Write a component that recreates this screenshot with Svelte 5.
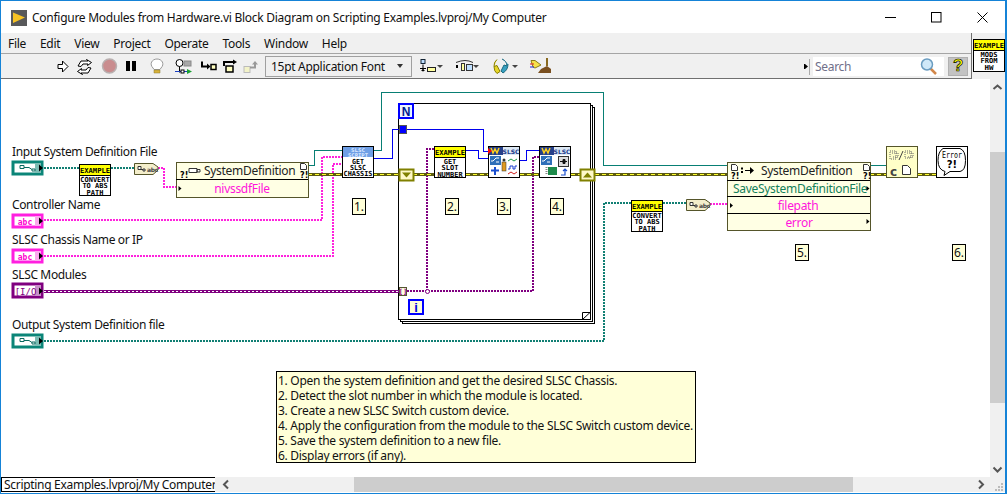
<script>
  const menus = ['File', 'Edit', 'View', 'Project', 'Operate', 'Tools', 'Window', 'Help'];
  const refWires = ['M308 165.5H314.5V150.5H342', 'M373 150.5H381.5V92.5H603.5V165.5H728', 'M870 165.5H886'];
  const pathWires = ['M44 168H79', 'M111 168H134', 'M44 341H604V203H631', 'M663 203H686'];
  const strWires = ['M158 168H164V187H176', 'M44 220H322V157H342', 'M44 256H333V164H342', 'M710 204H727'];
  const blueWires = ['M373 158.5H392.5V129.5H399', 'M407 129.5H483.5V151.5H488', 'M466 150.5H478.5V158.5H488', 'M520 160.5H526.5V150.5H539'];
  const purpleWires = ['M407 291H533V157H539', 'M427 291V149H434'];
  const classSegs = [[308, 342], [373, 399], [413, 434], [466, 488], [520, 539], [571, 580], [595, 728], [870, 886], [918, 936]];
  const steps = [
    { t: '1.', x: 352, y: 198 }, { t: '2.', x: 445, y: 198 }, { t: '3.', x: 497, y: 198 },
    { t: '4.', x: 550, y: 198 }, { t: '5.', x: 795, y: 244 }, { t: '6.', x: 952, y: 244 }
  ];
  const notes = [
    '1. Open the system definition and get the desired SLSC Chassis.',
    '2. Detect the slot number in which the module is located.',
    '3. Create a new SLSC Switch custom device.',
    '4. Apply the configuration from the module to the SLSC Switch custom device.',
    '5. Save the system definition to a new file.',
    '6. Display errors (if any).'
  ];
</script>

{#snippet exampleNode(x, y, lines)}
  <rect class="nodebox" x={x + .5} y={y + .5} width="31" height="31" />
  <rect class="exbar" x={x + 1} y={y + 1} width="30" height="10" />
  <line class="blk" x1={x} x2={x + 32} y1={y + 11.5} y2={y + 11.5} />
  <text class="pix" x={x + 16} y={y + 8.5} textLength="30" lengthAdjust="spacingAndGlyphs">EXAMPLE</text>
  {#each lines as l, i}
    <text class="pix" x={x + 16} y={y + 18 + i * 6.3} textLength={l.length * 4.2} lengthAdjust="spacingAndGlyphs">{l}</text>
  {/each}
{/snippet}

{#snippet convNode(x, y)}
  <path class="conv" d="M{x + .5} {y + .5}H{x + 19}L{x + 24} {y + 4}V{y + 7}L{x + 19} {y + 11.5}H{x + .5}Z" />
  <path class="thin" d="M{x + 4} {y + 3.5}h3v3h-3zM{x + 7} {y + 6.5}h2M{x + 9} {y + 6}h2v2h-2z" />
  <text class="conv-t" x={x + 13} y={y + 9}>abc</text>
{/snippet}

{#snippet pathTerm(y)}
  <rect class="term-path" x="13" y={y + 1} width="29" height="12" />
  <rect class="term-side-t" x="35" y={y + 2} width="6" height="10" />
  <path class="thin-t" d="M20 {y + 4.5}h4v3h-4zM24 {y + 6.5}h5l3 2M32 {y + 8}h3v2h-3z" />
  <path d="M39 {y + 3.5}l4 3.5l-4 3.5z" />
{/snippet}

{#snippet strTerm(y)}
  <rect class="term-str" x="13" y={y + 1} width="29" height="12" />
  <rect class="term-side-s" x="35" y={y + 2} width="6" height="10" />
  <text class="abc" x="25" y={y + 10.5}>abc</text>
  <path d="M39 {y + 3.5}l4 3.5l-4 3.5z" />
{/snippet}

{#snippet nodeFrame(x, y)}
  <rect class="nodebox" x={x + .5} y={y + .5} width="31" height="31" />
  <rect class="w-bg" x={x + 1} y={y + 1} width="14" height="8" />
  <path class="w-y" d="M{x + 3} {y + 2}l2 5l2 -4l2 4l2 -5" />
  <rect class="slsc-bg" x={x + 15} y={y + 1} width="16" height="8" />
  <text class="slsc" x={x + 23} y={y + 8}>SLSC</text>
  <rect class="sw" x={x + 2} y={y + 10} width="11" height="9" />
  <path class="wht" d="M{x + 3} {y + 15}h2l3 -3h3M{x + 8} {y + 16}h3" />
{/snippet}

<div class="window">
  <header class="title">
    <svg class="app-ic" viewBox="0 0 16 16"><rect width="16" height="16" fill="#58595b" /><path d="M2 2.5L14 7.5L2 13Z" fill="#f7c325" /></svg>
    <span class="title-t">Configure Modules from Hardware.vi Block Diagram on Scripting Examples.lvproj/My Computer</span>
    <div class="winbtns">
      <svg width="11" height="11" viewBox="0 0 11 11"><path d="M0 5.5H11" stroke="#000" /></svg>
      <svg width="11" height="11" viewBox="0 0 11 11"><rect x=".5" y=".5" width="9.5" height="9.5" fill="none" stroke="#000" /></svg>
      <svg width="11" height="11" viewBox="0 0 11 11"><path d="M.5 .5L10.5 10.5M10.5 .5L.5 10.5" stroke="#000" /></svg>
    </div>
  </header>

  <div class="barrow">
    <div class="bars">
      <nav class="menu">{#each menus as m}<span>{m}</span>{/each}</nav>
      <div class="toolbar">
        <svg class="tg1" viewBox="57 54 203 24" width="203" height="24">
          <path class="ol" d="M58 64.500h4.500v-3.500l5.500 5.500l-5.500 5.500v-3.500h-4.500z" />
          <path class="ol" d="M78 66l3 -5h7l-1.500 -1.500l5 3l-4 3l.5 -1.500h-5l-2 2.500zM91 68l-3 5h-7l1.500 1.500l-5 -3l4 -3l-.5 1.500h5l2 -2.500z" />
          <circle cx="109.500" cy="66" r="7" fill="#c98c8e" stroke="#b9b0b0" stroke-width="1.500" />
          <rect x="126" y="61" width="4" height="10" />
          <rect x="132" y="61" width="4" height="10" />
          <path d="M153 68c-4 -4 -1 -9 4 -9s8 5 4 9l-1 1.500h-6z" fill="#fff" stroke="#9a9a9a" />
          <path d="M154 70h6v3h-6z" fill="#d8b23a" stroke="#8a7a30" stroke-width=".5" />
          <circle cx="179.500" cy="63" r="3.500" class="ol" />
          <path d="M179.500 66.500v6" stroke="#000" />
          <rect x="184" y="61" width="7" height="5" fill="#a8a8a8" stroke="#888" />
          <path d="M175 71.500h13" stroke="#1a3fc0" />
          <rect x="181" y="70" width="3" height="3" class="ol" />
          <path d="M187 69l5 2.500l-5 2.500z" fill="#18a030" />
          <path class="k2" d="M202 61.500v5h6" />
          <path d="M207 63.500l3.500 3l-3.500 3z" />
          <rect x="211" y="64.500" width="5" height="5" fill="#ffffc0" stroke="#000" stroke-width="1.500" />
          <path class="k2" d="M224 66v-4h10" />
          <path d="M233 59.500l4 2.500l-4 2.500z" />
          <rect x="226" y="66" width="7" height="6" fill="#ffffc0" stroke="#000" stroke-width="1.500" />
          <rect x="244" y="66.500" width="6" height="6" fill="#f3f3c8" stroke="#bbb" />
          <path d="M250 67.500h5v-4" fill="none" stroke="#999" stroke-width="2" />
          <path d="M252 64.500l3 -3.500l3 3.500z" fill="#999" />
        </svg>
        <div class="fontsel"><span>15pt Application Font</span><i class="caret"></i></div>
        <svg class="tg2" viewBox="420 54 132 24" width="132" height="24">
          <rect x="421" y="59.500" width="4" height="4" fill="#bfe0ff" stroke="#123" />
          <path d="M423 64.500v7M420 68.500h6" stroke="#000" />
          <path d="M421 71l2 -2l2 2z" />
          <rect x="427.500" y="67.500" width="8" height="4" fill="#ffffa0" stroke="#222" />
          <path d="M437 65h6l-3 3z" fill="#444" />
          <path d="M456 62.500q5 -2 9 -2t8 2" fill="none" stroke="#333" />
          <rect x="456" y="65" width="2" height="3" />
          <rect x="461.500" y="63.500" width="3" height="7" fill="#ffffa0" stroke="#333" />
          <rect x="466.500" y="64.500" width="6" height="6" fill="#bfe0ff" stroke="#333" />
          <path d="M473 65h6l-3 3z" fill="#444" />
          <path d="M497 59.500a8 8 0 0 0 -3 7l3 -1l3 6l-3 2q-3 -2 -3 -7" fill="#e6d62a" stroke="#8a8000" />
          <path d="M502 59a8 8 0 0 1 5 7l-3 -1l-3 6l2 2q5 -3 5 -9" fill="#38a0c0" stroke="#1a6a80" />
          <path d="M512 65h6l-3 3z" fill="#444" />
          <path d="M531 60.500h4l6 4.500l-6 3l-2 -1z" fill="#f6e24a" stroke="#8a7d1a" />
          <path d="M530 64h4" stroke="#d22" />
          <path d="M530 67h4" stroke="#22d" />
          <path d="M546 58h2v8h-2z" fill="#8a6a20" />
          <path d="M538 73l3 -4l6 -3l4 3v4z" fill="#7a5020" />
        </svg>
        <div class="fill"></div>
        <svg class="more" width="6" height="19" viewBox="0 0 6 19"><path d="M0 7h1l3 2.500l-3 2.500h-1z" /><path d="M5.500 2V18" stroke="#aaa" /></svg>
        <div class="search">
          <span>Search</span>
          <svg width="17" height="17" viewBox="0 0 17 17"><path d="M10 10l6 6" stroke="#d2874a" stroke-width="2.500" /><circle cx="7" cy="6.500" r="5.500" fill="#cfe8f8" stroke="#6a9cc0" stroke-width="1.500" /></svg>
        </div>
        <div class="help"><span>?</span></div>
      </div>
    </div>
    <div class="vi-ic">
      <svg width="32" height="33" viewBox="0 0 32 33">
        <rect x=".5" y=".5" width="31" height="32" fill="#fff" stroke="#000" />
        <rect x="1" y="1" width="30" height="10" fill="#ff0" />
        <line x1="0" x2="32" y1="11.500" y2="11.500" stroke="#000" />
        <text class="pix" x="16" y="8.500" textLength="30" lengthAdjust="spacingAndGlyphs">EXAMPLE</text>
        <text class="pix" x="16" y="18" textLength="17" lengthAdjust="spacingAndGlyphs">MODS</text>
        <text class="pix" x="16" y="24.300" textLength="17" lengthAdjust="spacingAndGlyphs">FROM</text>
        <text class="pix" x="16" y="30.600" textLength="9" lengthAdjust="spacingAndGlyphs">HW</text>
      </svg>
    </div>
  </div>

  <div class="mid">
    <svg class="canvas" viewBox="1 79 989 398" width="989" height="398">
      <!-- labels -->
      <text class="lbl" x="12" y="156">Input System Definition File</text>
      <text class="lbl" x="12" y="209">Controller Name</text>
      <text class="lbl" x="12" y="244">SLSC Chassis Name or IP</text>
      <text class="lbl" x="12" y="279">SLSC Modules</text>
      <text class="lbl" x="12" y="329">Output System Definition file</text>

      <!-- structure -->
      <rect class="frame" x="402.500" y="107.500" width="192" height="216" />
      <rect class="frame" x="400.500" y="105.500" width="192" height="216" />
      <rect class="frame main" x="398.500" y="103.500" width="192" height="216" />
      <path class="fold" d="M582.500 320V312.500H590.500M582.500 319.500L590 312.500" />

      <!-- wires -->
      {#each refWires as d}<path class="w-ref" {d} />{/each}
      {#each pathWires as d}<path class="w-path" {d} />{/each}
      {#each strWires as d}<path class="w-str" {d} />{/each}
      {#each blueWires as d}<path class="w-blue" {d} />{/each}
      {#each purpleWires as d}<path class="w-pur" {d} />{/each}
      <circle cx="427.500" cy="291.500" r="2" fill="#fff" stroke="#800080" />
      <line class="arr-o" x1="44" x2="399" y1="291.500" y2="291.500" />
      <line class="arr-i" x1="44" x2="399" y1="291.500" y2="291.500" />
      {#each classSegs as s}
        <line class="cl-o" x1={s[0]} x2={s[1]} y1="174.500" y2="174.500" />
        <line class="cl-i" x1={s[0]} x2={s[1]} y1="174.500" y2="174.500" />
      {/each}

      <!-- terminals -->
      {@render pathTerm(161)}
      {@render strTerm(214)}
      {@render strTerm(249)}
      <rect class="term-arr" x="13" y="284" width="29" height="13" />
      <rect class="term-side-a" x="35" y="285" width="6" height="11" />
      <text class="io" x="25.500" y="294.500">[I/O</text>
      <path d="M39 287.500l4 3.500l-4 3.500z" />
      {@render pathTerm(334)}

      <!-- nodes -->
      {@render exampleNode(79, 164, ['CONVERT', 'TO ABS', 'PATH'])}
      {@render convNode(134, 163)}
      {@render exampleNode(631, 200, ['CONVERT', 'TO ABS', 'PATH'])}
      {@render convNode(686, 199)}

      <rect class="pn" x="176.500" y="162.500" width="132" height="35" />
      <line class="pn-l" x1="176" x2="308" y1="179.500" y2="179.500" />
      <text class="bang" x="180" y="178">?!</text>
      <path class="thin" d="M189 168.500h8v4h-8zM197 169.500h3v2.500h-3z" />
      <text class="pn-h" x="204" y="175">SystemDefinition</text>
      <path class="thin" d="M300.500 163.500h4l2 2v4h-6z" />
      <text class="bang" x="300" y="178">?!</text>
      <path d="M178.500 186l3 2.500l-3 2.500z" />
      <text class="pn-p" x="242" y="193">nivssdfFile</text>

      <rect class="nodebox" x="342.500" y="146.500" width="31" height="31" />
      <rect x="343" y="147" width="30" height="10" fill="#6f9fe6" />
      <text class="pix-w" x="358" y="151.500" textLength="14" lengthAdjust="spacingAndGlyphs">SLSC</text>
      <text class="pix-w" x="358" y="156.500" textLength="20" lengthAdjust="spacingAndGlyphs">SCRIPT</text>
      <text class="pix" x="358" y="163.500" textLength="12" lengthAdjust="spacingAndGlyphs">GET</text>
      <text class="pix" x="358" y="169.800" textLength="16" lengthAdjust="spacingAndGlyphs">SLSC</text>
      <text class="pix" x="358" y="176.100" textLength="29" lengthAdjust="spacingAndGlyphs">CHASSIS</text>

      {@render exampleNode(434, 146, ['GET', 'SLOT', 'NUMBER'])}

      {@render nodeFrame(488, 146)}
      <path d="M488 148l4 3l-4 3z" fill="#f00" />
      <path d="M491 170.500h8M495 167v8" stroke="#1a4fd0" stroke-width="2" />
      <circle cx="504" cy="160" r="1.500" fill="#333" />
      <rect x="502" y="162" width="4" height="9" fill="#e09a20" stroke="#333" stroke-width=".5" />
      <path d="M508 161l3 -2l3 2l3 -2" fill="none" stroke="#1a9a4a" />
      <path d="M508 169h2v-3h3v3h2v-3h2" fill="none" stroke="#1a3fd0" />
      <path d="M508 174l3 -2l3 2l3 -2" fill="none" stroke="#d02020" />

      {@render nodeFrame(539, 146)}
      <rect x="558.500" y="156.500" width="10" height="10" fill="#ddd" stroke="#333" />
      <path d="M560 161.500h3M563 159.500h2v4h-2zM565 161.500h2" stroke="#111" fill="#111" />
      <rect x="548" y="167" width="9" height="8" fill="#1d8a4a" />
      <path d="M546.500 167v8" stroke="#888" stroke-width="2" stroke-dasharray="1 1" />
      <path d="M561 175h4v-5M563 171l2 -2l2 2" fill="none" stroke="#1a4fd0" stroke-width="1.200" />

      <!-- tunnels -->
      <rect class="sr" x="399.500" y="169.500" width="14" height="11" />
      <path class="sr-t" d="M402 172.500h9l-4.500 5z" />
      <rect class="sr" x="580.500" y="169.500" width="14" height="11" />
      <path class="sr-t" d="M583 177.500h9l-4.500 -5z" />
      <rect x="399.500" y="125.500" width="7" height="8" fill="#0000ff" stroke="#555" />
      <rect x="399.500" y="287.500" width="7" height="8" fill="#ffffe0" stroke="#555530" />
      <text class="idx" x="403" y="294">[]</text>

      <rect class="nbox" x="399" y="104" width="14" height="14" />
      <text class="n" x="406" y="115.500">N</text>
      <rect class="ibox" x="409" y="300" width="14" height="14" />
      <text class="n i" x="416" y="312">i</text>

      <!-- write node -->
      <rect class="pn" x="727.500" y="162.500" width="143" height="68" />
      <line class="pn-l" x1="727" x2="870" y1="180.500" y2="180.500" />
      <line class="pn-l" x1="727" x2="870" y1="196.500" y2="196.500" />
      <line class="pn-l" x1="727" x2="870" y1="213.500" y2="213.500" />
      <path class="thin" d="M731.500 164.500h4l2 2v4h-6z" />
      <text class="bang" x="731" y="179">?!</text>
      <path d="M741 167.500h2v2h-2zM741 171h2v2h-2zM745 170h5v-3l4 3.500l-4 3.500v-3h-5z" />
      <text class="pn-h" x="761" y="174.500">SystemDefinition</text>
      <path class="thin" d="M864.500 164.500h4l2 2v4h-6z" transform="translate(-1 0)" />
      <text class="bang" x="863" y="179">?!</text>
      <text class="pn-g" x="733" y="192.500">SaveSystemDefinitionFile</text>
      <path d="M866.500 186l3 2.500l-3 2.500z" />
      <path d="M730 203l3 2.500l-3 2.500z" />
      <text class="pn-p" x="798" y="209.500">filepath</text>
      <text class="pn-p" x="799" y="226.500">error</text>
      <path d="M866.500 219l3 2.500l-3 2.500z" />

      <!-- format -->
      <rect class="fmt" x="886.500" y="146.500" width="31" height="31" />
      <path class="dots" d="M890 151h6v8h-6zM892 153h6v4h-6M905 151h6v7h-6zM907 153h6v4h-6" />
      <path d="M899 160l4 -9" stroke="#444" fill="none" />
      <text class="c" x="890" y="176">c</text>
      <path class="thin" d="M902.500 165.500h5l3 3v6h-8z" fill="#fff" />

      <!-- error -->
      <rect class="nodebox" x="936.500" y="146.500" width="31" height="31" />
      <path class="bub" d="M943 148.500h17q5.500 2 5.500 12t-5.500 11h-10l-6 4l1 -4q-7 -2 -7 -11t5 -12z" />
      <text class="err" x="952" y="158" textLength="20" lengthAdjust="spacingAndGlyphs">Error</text>
      <text class="qm" x="952" y="168">?!</text>

      <!-- step badges -->
      {#each steps as s}
        <rect class="step" x={s.x + .5} y={s.y + .5} width="13" height="16" />
        <text class="step-t" x={s.x + 7} y={s.y + 13}>{s.t}</text>
      {/each}

      <!-- note -->
      <rect class="note" x="276.500" y="371.500" width="419" height="91" />
      {#each notes as n, i}
        <text class="note-t" x="278" y={384.500 + i * 15}>{n}</text>
      {/each}
    </svg>

    <div class="vbar">
      <svg width="15" height="15" viewBox="0 0 15 15"><path class="chev" d="M3.500 10L7.500 6.500L11.500 10" /></svg>
      <div class="vthumb"></div>
      <div class="fill"></div>
      <svg width="15" height="15" viewBox="0 0 15 15"><path class="chev" d="M3.500 5.500L7.500 9.500L11.500 5.500" /></svg>
    </div>
  </div>

  <footer class="status">
    <div class="path">Scripting Examples.lvproj/My Computer</div>
    <div class="hbar">
      <svg class="harr" width="15" height="15" viewBox="0 0 15 15"><path class="chev" d="M10 3.500L6 7.500L10 11.500" /></svg>
      <div class="hthumb"></div>
      <div class="fill"></div>
      <svg class="harr" width="15" height="15" viewBox="0 0 15 15"><path class="chev" d="M6 3.500L10 7.500L6 11.500" /></svg>
    </div>
    <svg class="grip" width="15" height="15" viewBox="0 0 15 15"><path fill="#bbb" d="M11 6h2v2h-2zM8 9h2v2h-2zM11 9h2v2h-2zM5 12h2v2h-2zM8 12h2v2h-2zM11 12h2v2h-2z" /></svg>
  </footer>
</div>

<style>
  :global(body) { margin: 0; background: #fff; }
  .window {
    width: 1007px; height: 494px; box-sizing: border-box; overflow: hidden;
    border: 1px solid #1583d7; border-right-width: 2px;
    display: flex; flex-direction: column;
    font-family: "Noto Sans", "Open Sans", sans-serif; font-size: 12px; color: #111; background: #fff;
    letter-spacing: -.3px;
  }
  .fill { flex: 1; }
  .title { height: 32px; display: flex; align-items: center; flex: none; }
  .app-ic { width: 16px; height: 16px; margin-left: 10px; margin-top: 1px; }
  .title-t { margin-left: 5px; font-size: 12px; white-space: nowrap; letter-spacing: -.27px; }
  .winbtns { margin-left: auto; display: flex; gap: 35px; margin-right: 17px; margin-top: 0; }
  .barrow { display: flex; height: 46px; flex: none; background: #f0f0f0; }
  .bars { width: 970px; border-right: 1px solid #707070; display: flex; flex-direction: column; box-sizing: content-box; }
  .menu { height: 20px; display: flex; gap: 14px; padding-left: 7px; align-items: center; font-size: 12px; }
  .toolbar {
    height: 24px; border-top: 1px solid #a5a5a5; border-bottom: 1px solid #707070;
    display: flex; align-items: center; padding-left: 56px; box-sizing: content-box;
  }
  .tg1, .tg2 { flex: none; display: block; }
  .ol { fill: #fff; stroke: #000; stroke-width: 1; }
  .k2 { fill: none; stroke: #000; stroke-width: 2; }
  .fontsel {
    margin-left: 5px; width: 147px; height: 21px; box-sizing: border-box; border: 1px solid #a0a0a0;
    display: flex; align-items: center; padding-left: 5px; font-size: 12px;
  }
  .caret { margin-left: auto; margin-right: 8px; border: 3px solid transparent; border-top: 4px solid #333; border-bottom: 0; border-left-width: 3px; }
  .tg2 { margin-left: 8px; }
  .more { flex: none; }
  .search {
    width: 131px; height: 19px; background: #fff; margin-left: 3px; display: flex; align-items: center;
    justify-content: space-between; padding: 0 7px 0 2px; box-sizing: border-box; color: #70708a; font-size: 12px;
  }
  .help {
    width: 20px; height: 19px; margin: 0 3px 0 4px; background: #c3c3c3; border: 1px solid #b0b0b0; box-sizing: border-box;
    display: flex; align-items: center; justify-content: center;
  }
  .help span { font: bold 17px "Liberation Sans", sans-serif; color: #ff0; -webkit-text-stroke: .7px #000; }
  .vi-ic { padding: 6px 0 0 1px; }
  .vi-ic svg { display: block; }
  .mid { flex: 1; display: flex; min-height: 0; }
  .canvas { flex: none; display: block; }
  .vbar { width: 15px; background: #f0f0f0; display: flex; flex-direction: column; flex: none; }
  .vbar svg { flex: none; display: block; }
  .vthumb { height: 251px; margin-top: 58px; background: #cdcdcd; flex: none; }
  .chev { fill: none; stroke: #555; stroke-width: 2; }
  .status { height: 15px; flex: none; display: flex; margin-bottom: 1px; background: #f0f0f0; }
  .path {
    width: 214px; flex: none; box-sizing: border-box; background: #fff; border-top: 1px solid #000; border-bottom: 1px solid #000;
    border-left: 1px solid #000; padding-left: 2px; font-size: 12px; line-height: 13px; white-space: nowrap; overflow: hidden;
  }
  .hbar { flex: 1; display: flex; }
  .harr { flex: none; margin-left: 3px; }
  .hthumb { width: 499px; margin-left: 121px; background: #cdcdcd; flex: none; }
  .hbar .harr:last-child { margin-left: 0; margin-right: 2px; }
  .grip { flex: none; }

  .lbl, .pn-h, .pn-p, .pn-g, .note-t, .step-t { font-family: "Noto Sans", "Open Sans", sans-serif; }
  .lbl { font-size: 12px; fill: #111; letter-spacing: -.36px; }
  .frame { fill: #fff; stroke: #000; stroke-width: 1; shape-rendering: crispEdges; }
  .main { stroke-width: 1.4; }
  .fold { fill: none; stroke: #000; stroke-width: 1; }
  .w-ref { fill: none; stroke: #087f74; stroke-width: 1; shape-rendering: crispEdges; }
  .w-path { fill: none; stroke: #117f73; stroke-width: 2; stroke-dasharray: 2 1; }
  .w-str { fill: none; stroke: #ff22dd; stroke-width: 2; stroke-dasharray: 2 1; }
  .w-blue { fill: none; stroke: #0000ee; stroke-width: 1; shape-rendering: crispEdges; }
  .w-pur { fill: none; stroke: #800080; stroke-width: 2; stroke-dasharray: 2 1; }
  .arr-o { stroke: #800080; stroke-width: 3; }
  .arr-i { stroke: #fff; stroke-width: 1; stroke-dasharray: 2 2; }
  .cl-o { stroke: #5c5a10; stroke-width: 3; }
  .cl-i { stroke: #ffff30; stroke-width: 1; stroke-dasharray: 4 3; }
  .nodebox { fill: #fff; stroke: #000; stroke-width: 1; }
  .exbar { fill: #ff0; }
  .blk { stroke: #000; stroke-width: 1; }
  .pix, .pix-w { font: bold 7px "DejaVu Sans Mono", "Liberation Mono", monospace; text-anchor: middle; fill: #000; letter-spacing: 0; }
  .pix-w { fill: #dfeaff; font-size: 5px; }
  .conv { fill: #f4eecb; stroke: #55552a; stroke-width: 1; }
  .conv-t { font: bold 6px "DejaVu Sans", sans-serif; fill: #444; }
  .thin { fill: #fff; stroke: #333; stroke-width: 1; }
  .thin-t { fill: #fff; stroke: #0a6a60; stroke-width: 1; }
  .term-path { fill: #fff; stroke: #0b8578; stroke-width: 3; }
  .term-side-t { fill: #7cbcb4; }
  .term-str { fill: #fff; stroke: #ff1fe0; stroke-width: 3; }
  .term-side-s { fill: #fca8ee; }
  .term-arr { fill: #fff; stroke: #800080; stroke-width: 3; }
  .term-side-a { fill: #c890c8; }
  .abc { font: bold 8px "DejaVu Sans Mono", monospace; fill: #ff00d0; text-anchor: middle; letter-spacing: 0; }
  .io { font: 9px "DejaVu Sans Mono", monospace; fill: #800080; text-anchor: middle; letter-spacing: 0; }
  .w-bg { fill: #26408a; }
  .w-y { fill: none; stroke: #ffd21e; stroke-width: 1.500; }
  .slsc-bg { fill: #dce8f4; }
  .slsc { font: bold 6px "DejaVu Sans", sans-serif; fill: #1a3a8a; text-anchor: middle; letter-spacing: 0; }
  .sw { fill: #2f6fb8; }
  .wht { fill: none; stroke: #fff; stroke-width: 1; }
  .pn { fill: #ffffe4; stroke: #55552a; stroke-width: 1; }
  .pn-l { stroke: #000; stroke-width: 1; }
  .pn-h { font-size: 12px; fill: #222; letter-spacing: -.3px; }
  .pn-p { font-size: 12px; fill: #ff14dc; text-anchor: middle; letter-spacing: -.3px; }
  .pn-g { font-size: 12px; fill: #14805a; letter-spacing: -.3px; }
  .bang { font: bold 8px "DejaVu Sans", sans-serif; fill: #000; letter-spacing: 0; }
  .sr { fill: #fff8c8; stroke: #808000; stroke-width: 2; }
  .sr-t { fill: #808000; }
  .idx { font: bold 7px "DejaVu Sans Mono", monospace; fill: #800080; text-anchor: middle; letter-spacing: 0; }
  .nbox { fill: #eef4ff; stroke: #0000ff; stroke-width: 2; }
  .ibox { fill: #ffffd8; stroke: #0000ff; stroke-width: 2; }
  .n { font: bold 12px "Liberation Sans", sans-serif; fill: #001a90; text-anchor: middle; letter-spacing: 0; }
  .i { fill: #0000e0; font-size: 13px; }
  .fmt { fill: #ffffc8; stroke: #55552a; stroke-width: 1; }
  .dots { fill: none; stroke: #666; stroke-width: 1; stroke-dasharray: 1 1; }
  .c { font: bold 12px "DejaVu Sans", sans-serif; fill: #444; letter-spacing: 0; }
  .bub { fill: #fff; stroke: #000; stroke-width: 1; }
  .err { font: 8px "DejaVu Sans Mono", monospace; fill: #000; text-anchor: middle; letter-spacing: 0; }
  .qm { font: bold 10px "DejaVu Sans", sans-serif; fill: #000; text-anchor: middle; letter-spacing: 0; }
  .step { fill: #ffffd8; stroke: #000; stroke-width: 1; }
  .step-t { font-size: 12px; fill: #111; text-anchor: middle; letter-spacing: 0; }
  .note { fill: #ffffd8; stroke: #000; stroke-width: 1; }
  .note-t { font-size: 12px; fill: #111; letter-spacing: -.29px; }
</style>
